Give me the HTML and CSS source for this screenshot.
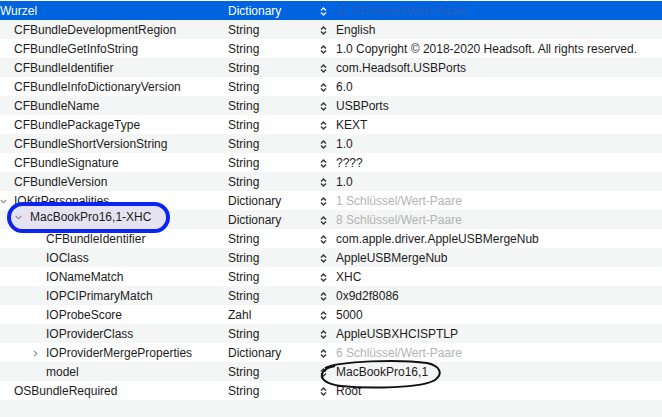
FILE: index.html
```html
<!DOCTYPE html>
<html>
<head>
<meta charset="utf-8">
<link rel="stylesheet" href="styles.css">
</head>
<body>
<div class="plist">
  <div class="row head">
    <div class="key">Wurzel</div>
    <div class="type">Dictionary</div>
    <div class="val"><svg class="step" viewBox="0 0 7 10"><polyline points="1,4 3.5,1.5 6,4"/><polyline points="1,6 3.5,8.5 6,6"/></svg><span class="ph">11 Schlüssel/Wert-Paare</span></div>
  </div>
  <div class="row alt"><div class="key l1"><span class="disc"></span>CFBundleDevelopmentRegion</div><div class="type">String</div><div class="val"><svg class="step" viewBox="0 0 7 10"><polyline points="1,4 3.5,1.5 6,4"/><polyline points="1,6 3.5,8.5 6,6"/></svg>English</div></div>
  <div class="row"><div class="key l1"><span class="disc"></span>CFBundleGetInfoString</div><div class="type">String</div><div class="val"><svg class="step" viewBox="0 0 7 10"><polyline points="1,4 3.5,1.5 6,4"/><polyline points="1,6 3.5,8.5 6,6"/></svg>1.0 Copyright © 2018-2020 Headsoft. All rights reserved.</div></div>
  <div class="row alt"><div class="key l1"><span class="disc"></span>CFBundleIdentifier</div><div class="type">String</div><div class="val"><svg class="step" viewBox="0 0 7 10"><polyline points="1,4 3.5,1.5 6,4"/><polyline points="1,6 3.5,8.5 6,6"/></svg>com.Headsoft.USBPorts</div></div>
  <div class="row"><div class="key l1"><span class="disc"></span>CFBundleInfoDictionaryVersion</div><div class="type">String</div><div class="val"><svg class="step" viewBox="0 0 7 10"><polyline points="1,4 3.5,1.5 6,4"/><polyline points="1,6 3.5,8.5 6,6"/></svg>6.0</div></div>
  <div class="row alt"><div class="key l1"><span class="disc"></span>CFBundleName</div><div class="type">String</div><div class="val"><svg class="step" viewBox="0 0 7 10"><polyline points="1,4 3.5,1.5 6,4"/><polyline points="1,6 3.5,8.5 6,6"/></svg>USBPorts</div></div>
  <div class="row"><div class="key l1"><span class="disc"></span>CFBundlePackageType</div><div class="type">String</div><div class="val"><svg class="step" viewBox="0 0 7 10"><polyline points="1,4 3.5,1.5 6,4"/><polyline points="1,6 3.5,8.5 6,6"/></svg>KEXT</div></div>
  <div class="row alt"><div class="key l1"><span class="disc"></span>CFBundleShortVersionString</div><div class="type">String</div><div class="val"><svg class="step" viewBox="0 0 7 10"><polyline points="1,4 3.5,1.5 6,4"/><polyline points="1,6 3.5,8.5 6,6"/></svg>1.0</div></div>
  <div class="row"><div class="key l1"><span class="disc"></span>CFBundleSignature</div><div class="type">String</div><div class="val"><svg class="step" viewBox="0 0 7 10"><polyline points="1,4 3.5,1.5 6,4"/><polyline points="1,6 3.5,8.5 6,6"/></svg>????</div></div>
  <div class="row alt"><div class="key l1"><span class="disc"></span>CFBundleVersion</div><div class="type">String</div><div class="val"><svg class="step" viewBox="0 0 7 10"><polyline points="1,4 3.5,1.5 6,4"/><polyline points="1,6 3.5,8.5 6,6"/></svg>1.0</div></div>
  <div class="row"><div class="key l1"><span class="disc"><svg viewBox="0 0 7 5"><polyline points="0.8,1 3.5,3.8 6.2,1"/></svg></span>IOKitPersonalities</div><div class="type">Dictionary</div><div class="val"><svg class="step" viewBox="0 0 7 10"><polyline points="1,4 3.5,1.5 6,4"/><polyline points="1,6 3.5,8.5 6,6"/></svg><span class="ph">1 Schlüssel/Wert-Paare</span></div></div>
  <div class="row alt"><div class="key l2 covered"></div><div class="type">Dictionary</div><div class="val"><svg class="step" viewBox="0 0 7 10"><polyline points="1,4 3.5,1.5 6,4"/><polyline points="1,6 3.5,8.5 6,6"/></svg><span class="ph">8 Schlüssel/Wert-Paare</span></div></div>
  <div class="row"><div class="key l3"><span class="disc"></span>CFBundleIdentifier</div><div class="type">String</div><div class="val"><svg class="step" viewBox="0 0 7 10"><polyline points="1,4 3.5,1.5 6,4"/><polyline points="1,6 3.5,8.5 6,6"/></svg>com.apple.driver.AppleUSBMergeNub</div></div>
  <div class="row alt"><div class="key l3"><span class="disc"></span>IOClass</div><div class="type">String</div><div class="val"><svg class="step" viewBox="0 0 7 10"><polyline points="1,4 3.5,1.5 6,4"/><polyline points="1,6 3.5,8.5 6,6"/></svg>AppleUSBMergeNub</div></div>
  <div class="row"><div class="key l3"><span class="disc"></span>IONameMatch</div><div class="type">String</div><div class="val"><svg class="step" viewBox="0 0 7 10"><polyline points="1,4 3.5,1.5 6,4"/><polyline points="1,6 3.5,8.5 6,6"/></svg>XHC</div></div>
  <div class="row alt"><div class="key l3"><span class="disc"></span>IOPCIPrimaryMatch</div><div class="type">String</div><div class="val"><svg class="step" viewBox="0 0 7 10"><polyline points="1,4 3.5,1.5 6,4"/><polyline points="1,6 3.5,8.5 6,6"/></svg>0x9d2f8086</div></div>
  <div class="row"><div class="key l3"><span class="disc"></span>IOProbeScore</div><div class="type">Zahl</div><div class="val"><svg class="step" viewBox="0 0 7 10"><polyline points="1,4 3.5,1.5 6,4"/><polyline points="1,6 3.5,8.5 6,6"/></svg>5000</div></div>
  <div class="row alt"><div class="key l3"><span class="disc"></span>IOProviderClass</div><div class="type">String</div><div class="val"><svg class="step" viewBox="0 0 7 10"><polyline points="1,4 3.5,1.5 6,4"/><polyline points="1,6 3.5,8.5 6,6"/></svg>AppleUSBXHCISPTLP</div></div>
  <div class="row"><div class="key l3"><span class="disc"><svg viewBox="0 0 5 7"><polyline points="1,0.8 3.8,3.5 1,6.2"/></svg></span>IOProviderMergeProperties</div><div class="type">Dictionary</div><div class="val"><svg class="step" viewBox="0 0 7 10"><polyline points="1,4 3.5,1.5 6,4"/><polyline points="1,6 3.5,8.5 6,6"/></svg><span class="ph">6 Schlüssel/Wert-Paare</span></div></div>
  <div class="row alt"><div class="key l3"><span class="disc"></span>model</div><div class="type">String</div><div class="val"><svg class="step" viewBox="0 0 7 10"><polyline points="1,4 3.5,1.5 6,4"/><polyline points="1,6 3.5,8.5 6,6"/></svg>MacBookPro16,1</div></div>
  <div class="row"><div class="key l1"><span class="disc"></span>OSBundleRequired</div><div class="type">String</div><div class="val"><svg class="step" viewBox="0 0 7 10"><polyline points="1,4 3.5,1.5 6,4"/><polyline points="1,6 3.5,8.5 6,6"/></svg>Root</div></div>
  <div class="row alt empty"></div>

  <div class="oval"><span class="disc"><svg viewBox="0 0 7 5"><polyline points="0.8,1 3.5,3.8 6.2,1"/></svg></span>MacBookPro16,1-XHC</div>
  <svg class="ring" viewBox="0 0 124 30"><path d="M6,9 C20,2 80,0 108,4 C122,7 124,15 116,21 C104,29 50,30 22,27 C6,25 0,19 4,13 C6,10 10,8 16,7"/></svg>
</div>
</body>
</html>
```

FILE: styles.css
```css
html, body {
  margin: 0;
  padding: 0;
  background: #ffffff;
}
body {
  font-family: "Liberation Sans", Arial, sans-serif;
  font-size: 12px;
  color: #1c1c1c;
}
.plist {
  position: relative;
  padding-top: 1px;
  width: 662px;
  height: 416px;
  overflow: hidden;
}
.row {
  display: grid;
  grid-template-columns: 228px 92px 1fr;
  box-sizing: border-box;
  height: 19px;
  padding-top: 1px;
  line-height: 18px;
  white-space: nowrap;
  background: #ffffff;
}
.row.alt {
  background: #f4f5f5;
}
.row.empty {
  height: 18px;
}
.row.head {
  background: #0064e1;
  color: #ffffff;
}
.key {
  display: flex;
  align-items: center;
  overflow: hidden;
}
.key.l1 { padding-left: 0; }
.key.l2 { padding-left: 16px; }
.key.l3 { padding-left: 32px; }
.disc {
  width: 14px;
  flex: none;
  display: flex;
  align-items: center;
}
.disc svg {
  width: 7px;
  height: 7px;
  fill: none;
  stroke: #8a8a8a;
  stroke-width: 1.1;
}
.val {
  display: flex;
  align-items: center;
}
.step {
  width: 7px;
  height: 11px;
  margin-right: 9px;
  fill: none;
  stroke: #3a3a3a;
  stroke-width: 1.5;
  flex: none;
}
.head .step {
  stroke: #e4ebf8;
}
.ph {
  color: #b3b3b3;
}
.head .ph {
  color: #2a5cbd;
}
.oval {
  position: absolute;
  left: 7px;
  top: 202px;
  width: 151px;
  height: 23px;
  border: 4px solid #0a24f2;
  border-radius: 16px;
  background: #e5e3f1;
  display: flex;
  align-items: center;
  padding-left: 4px;
  line-height: 19px;
  color: #1c1c1c;
  font-size: 12px;
}
.oval .disc {
  width: 15px;
}
.ring {
  position: absolute;
  left: 319px;
  top: 359px;
  width: 124px;
  height: 30px;
  fill: none;
  stroke: #111111;
  stroke-width: 2;
  overflow: visible;
}
```
